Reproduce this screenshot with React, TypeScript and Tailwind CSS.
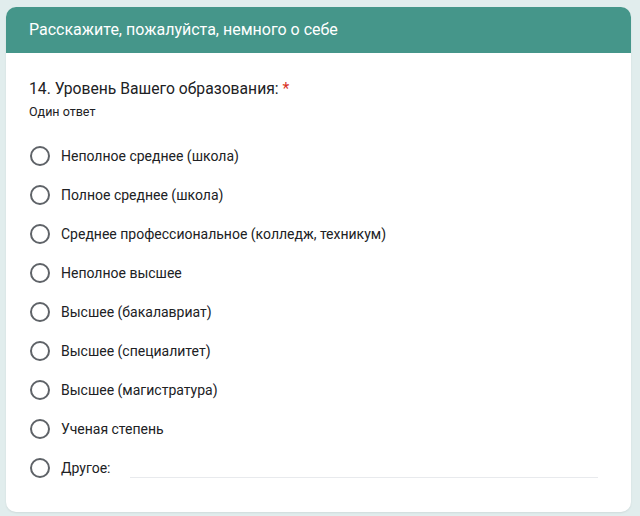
import React from 'react';

const OPTIONS = [
  'Неполное среднее (школа)',
  'Полное среднее (школа)',
  'Среднее профессиональное (колледж, техникум)',
  'Неполное высшее',
  'Высшее (бакалавриат)',
  'Высшее (специалитет)',
  'Высшее (магистратура)',
  'Ученая степень',
];

const Radio = () => (
  <span className="ml-[1px] block h-[20px] w-[20px] shrink-0 rounded-full border-2 border-[#5f6368]" />
);

export default function App() {
  return (
    <div
      className="min-h-[516px] w-[640px] bg-[#e1eded] pt-[7px] pl-[6px]"
      style={{ fontFamily: 'Roboto, "Noto Sans", sans-serif' }}
    >
      <div className="flex h-[505px] w-[625px] flex-col overflow-hidden rounded-[10px] bg-white shadow-[0_1px_2px_rgba(0,0,0,0.08)]">
        <div className="flex h-[46px] items-center bg-[#45968a] px-[23px]">
          <h1 className="text-[16px] leading-none text-white">
            Расскажите, пожалуйста, немного о себе
          </h1>
        </div>

        <div className="flex flex-col px-[23px] pt-[24px]">
          <h2 className="text-[15.7px] leading-[24px] text-[#202124]">
            14. Уровень Вашего образования: <span className="text-[#d93025]">*</span>
          </h2>
          <p className="mt-[2px] text-[12.5px] leading-[17px] text-[#202124]">Один ответ</p>

          <div className="mt-[16px] flex flex-col">
            {OPTIONS.map((option) => (
              <label key={option} className="flex h-[39px] items-center gap-[11px]">
                <Radio />
                <span className="text-[14px] leading-none text-[#202124]">{option}</span>
              </label>
            ))}

            <label className="flex h-[39px] items-center gap-[11px]">
              <Radio />
              <span className="text-[14px] leading-none text-[#202124]">Другое:</span>
              <span className="ml-[9px] mr-[10px] mt-[19px] block h-px flex-1 bg-[#e8eaed]" />
            </label>
          </div>
        </div>
      </div>
    </div>
  );
}
